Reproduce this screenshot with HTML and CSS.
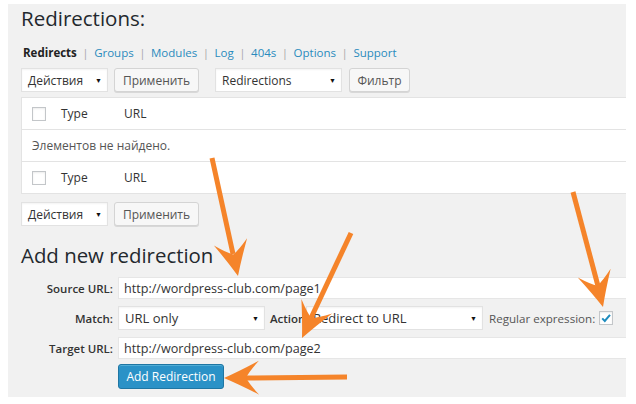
FILE: index.html
```html
<!DOCTYPE html>
<html lang="ru">
<head>
<meta charset="utf-8">
<title>Redirections</title>
<link rel="stylesheet" href="styles.css">
</head>
<body>
<div class="page">
  <h1 class="title">Redirections:</h1>
  <ul class="subnav">
    <li><b>Redirects</b><span class="sep">|</span></li>
    <li><a>Groups</a><span class="sep">|</span></li>
    <li><a>Modules</a><span class="sep">|</span></li>
    <li><a>Log</a><span class="sep">|</span></li>
    <li><a>404s</a><span class="sep">|</span></li>
    <li><a>Options</a><span class="sep">|</span></li>
    <li><a>Support</a></li>
  </ul>
  <div class="toolbar">
    <div class="select w-actions"><span>Действия</span><span class="caret">▼</span></div>
    <div class="btn w-apply">Применить</div>
    <div class="select w-group"><span>Redirections</span><span class="caret">▼</span></div>
    <div class="btn w-filter">Фильтр</div>
  </div>
  <div class="list">
    <div class="list-row">
      <span class="cb"></span><span class="col-type">Type</span><span class="col-url">URL</span>
    </div>
    <div class="list-row empty">Элементов не найдено.</div>
    <div class="list-row">
      <span class="cb"></span><span class="col-type">Type</span><span class="col-url">URL</span>
    </div>
  </div>
  <div class="toolbar toolbar-bottom">
    <div class="select w-actions"><span>Действия</span><span class="caret">▼</span></div>
    <div class="btn w-apply">Применить</div>
  </div>
  <h2 class="subtitle">Add new redirection</h2>
  <div class="form">
    <div class="label row-src">Source URL:</div>
    <div class="input row-src">http://wordpress-club.com/page1</div>
    <div class="label row-match">Match:</div>
    <div class="match row-match">
      <div class="select w-match"><span>URL only</span><span class="caret">▼</span></div>
      <div class="label inline">Action:</div>
      <div class="select w-action"><span>Redirect to URL</span><span class="caret">▼</span></div>
      <span class="regex">Regular expression:</span>
      <span class="cb checked"><svg viewBox="0 0 14 14" width="14" height="14"><path d="M3.2 7.4 L5.8 10 L11 3.8" fill="none" stroke="#1e8cbe" stroke-width="2"/></svg></span>
    </div>
    <div class="label row-target">Target URL:</div>
    <div class="input row-target">http://wordpress-club.com/page2</div>
    <div class="submit"><div class="btn-primary">Add Redirection</div></div>
  </div>
  <svg class="arrows" width="636" height="404" viewBox="0 0 636 404">
    <g fill="#f5842a" stroke="#f5842a">
      <line x1="212" y1="158" x2="233" y2="254" stroke-width="5"/>
      <path stroke="none" transform="translate(238 276) rotate(77.6)" d="M0 0 Q-16 -7 -35 -17 Q-25 -6 -22 0 Q-25 6 -35 17 Q-16 7 0 0 Z"/>
      <line x1="351" y1="233" x2="311" y2="318" stroke-width="5"/>
      <path stroke="none" transform="translate(302 338) rotate(115)" d="M0 0 Q-16 -7 -35 -17 Q-25 -6 -22 0 Q-25 6 -35 17 Q-16 7 0 0 Z"/>
      <line x1="573" y1="192" x2="598" y2="286" stroke-width="5"/>
      <path stroke="none" transform="translate(603 307) rotate(75.4)" d="M0 0 Q-16 -7 -35 -17 Q-25 -6 -22 0 Q-25 6 -35 17 Q-16 7 0 0 Z"/>
      <line x1="347" y1="377" x2="246" y2="378" stroke-width="5"/>
      <path stroke="none" transform="translate(224 378) rotate(179.5)" d="M0 0 Q-16 -7 -35 -17 Q-25 -6 -22 0 Q-25 6 -35 17 Q-16 7 0 0 Z"/>
    </g>
  </svg>
</div>
</body>
</html>
```
FILE: styles.css
```css
* { box-sizing: border-box; }
html, body { margin: 0; padding: 0; background: #ffffff; }
body {
  font-family: "Open Sans", "Noto Sans", sans-serif;
  color: #444;
  font-size: 12px;
}
.page {
  position: relative;
  margin: 4px 10px 7px 8px;
  width: 618px;
  height: 393px;
  background: #f1f1f1;
  padding-left: 13px;
  overflow: visible;
}
.title {
  margin: 0;
  font-weight: 400;
  font-size: 20.5px;
  line-height: 28px;
  color: #23282d;
}
.subnav {
  list-style: none;
  margin: 13px 0 0 2px;
  padding: 0;
  display: flex;
  font-size: 11.5px;
  line-height: 16px;
  color: #666;
}
.subnav b { color: #222; font-weight: 700; }
.subnav a { color: #2a8bbd; }
.subnav .sep { color: #aaa; margin: 0 5.5px; }
.toolbar {
  display: flex;
  align-items: center;
  margin-top: 7px;
  height: 24px;
}
.toolbar-bottom { margin-top: 8px; }
.select {
  height: 24px;
  background: #fff;
  border: 1px solid #e2e2e2;
  box-shadow: inset 0 1px 2px rgba(0,0,0,0.05);
  display: flex;
  align-items: center;
  justify-content: space-between;
  padding: 0 5px 0 6px;
  font-size: 12px;
  color: #333;
}
.caret { font-size: 7px; color: #111; }
.btn {
  height: 24px;
  background: #f7f7f7;
  border: 1px solid #d4d4d4;
  border-radius: 3px;
  box-shadow: 0 1px 0 #d8d8d8;
  display: flex;
  align-items: center;
  justify-content: center;
  font-size: 12px;
  color: #555;
}
.w-actions { width: 87px; }
.w-apply { width: 85px; margin-left: 6px; }
.w-group { width: 127px; margin-left: 16px; }
.w-filter { width: 61px; margin-left: 7px; }
.list {
  margin-top: 5px;
  background: #fff;
  border: 1px solid #e3e3e3;
  border-right: none;
}
.list-row {
  height: 32px;
  display: flex;
  align-items: center;
  padding-left: 10px;
  border-top: 1px solid #e3e3e3;
  font-size: 12px;
  color: #333;
}
.list-row:first-child { border-top: none; height: 31px; }
.list-row.empty { color: #555; }
.cb {
  width: 14px;
  height: 14px;
  border: 1px solid #c3c6c9;
  background: #fff;
  box-shadow: inset 0 1px 2px rgba(0,0,0,0.08);
  display: inline-flex;
  flex: none;
}
.col-type { margin-left: 15px; width: 63px; }
.subtitle {
  margin: 16px 0 0 0;
  font-weight: 400;
  font-size: 20.4px;
  line-height: 26px;
  color: #23282d;
}
.form {
  margin-top: 9px;
  display: grid;
  grid-template-columns: 92px 1fr;
  column-gap: 5px;
  row-gap: 7px;
}
.label {
  font-weight: 600;
  font-size: 11.5px;
  color: #333;
  text-align: right;
  align-self: center;
}
.label.inline { margin-left: 5px; width: 36px; text-align: left; }
.input {
  height: 22px;
  background: #fff;
  border: 1px solid #e6e6e6;
  border-right: none;
  display: flex;
  align-items: center;
  padding-left: 5px;
  font-size: 12.6px;
  color: #333;
}
.match { display: flex; align-items: center; height: 24px; }
.w-match { width: 147px; font-size: 13px; }
.w-action { width: 177px; font-size: 13px; }
.regex { margin-left: 6px; font-size: 11.6px; color: #555; }
.cb.checked { margin-left: 4px; }
.cb.checked svg { display: block; margin: -1px; }
.submit { grid-column: 2; margin-top: -2px; }
.btn-primary {
  width: 106px;
  height: 25px;
  background: #2b92c7;
  border: 1px solid #1f76a3;
  border-radius: 3px;
  box-shadow: inset 0 1px 0 rgba(120,200,230,0.5);
  color: #fff;
  font-size: 12px;
  display: flex;
  align-items: center;
  justify-content: center;
}
.arrows {
  position: absolute;
  left: -8px;
  top: -4px;
  pointer-events: none;
}
```
